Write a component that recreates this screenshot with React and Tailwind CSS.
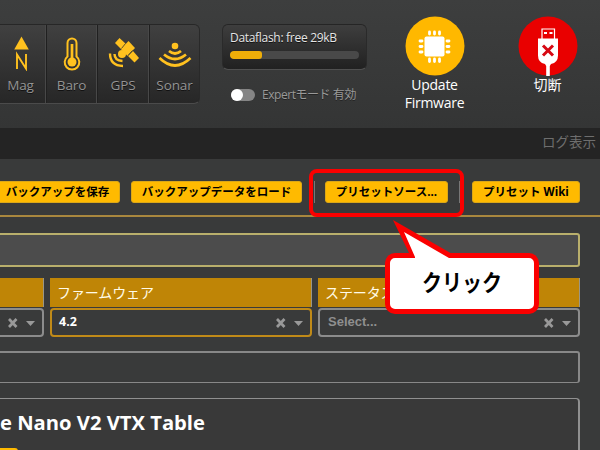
import React from "react";

function Sensor({ label, children, className = "" }) {
  return (
    <div className={`flex shrink-0 flex-col items-center border-l border-l-[#202020] border-r border-r-[#484848] pt-2.5 ${className}`}>
      <svg viewBox="0 0 36 36" className="h-9 w-9 shrink-0" fill="none" stroke="#ffc11f">{children}</svg>
      <span className="mt-[5px] whitespace-nowrap text-[13.5px] leading-[18px] tracking-[-0.1px] text-[#949494] [text-shadow:0_1px_#111]">{label}</span>
    </div>
  );
}

function Button({ children, className }) {
  return (
    <button className={`flex h-[22px] shrink-0 items-center justify-center whitespace-nowrap rounded-[3px] border border-[#dba718] bg-[#ffba00] text-[11.5px] font-bold leading-none text-black ${className}`}>
      {children}
    </button>
  );
}

function Filter({ label, value, className, border = "border-[#8c8c8c]", valueClass = "" }) {
  return (
    <div className={`shrink-0 ${className}`}>
      <div className="h-[29px] border-r border-r-[#9b9684] bg-[#bf8506] pl-[7px] text-[14px] leading-[29px] tracking-[-0.1px] text-[#fffbe7]">{label}</div>
      <div className={`mt-px flex h-[29px] items-center rounded-[4px] border-2 pl-[7px] pr-[6px] ${border}`}>
        <span className={`grow pb-px font-bold ${valueClass}`}>{value}</span>
        <svg viewBox="0 0 28 10" className="h-[10px] w-[28px] shrink-0">
          <path d="M1 1l7.500 8M8.500 1L1 9" stroke="#999" strokeWidth="2.700" />
          <path d="M18 3h9l-4.500 5z" fill="#999" />
        </svg>
      </div>
    </div>
  );
}

function Header() {
  return (
    <header className="flex h-32 items-start bg-linear-to-b from-[#3d3e3e] to-[#343535] pl-0">
      <div className="mt-6 flex h-[80px] w-[200px] shrink-0 overflow-hidden rounded-r-[6px] border-y border-r border-t-[#272727] border-r-[#292929] border-b-[#4b4b4b] bg-linear-to-b from-[#404040] to-[#272727]">
        <Sensor label="Mag" className="-ml-[5px] w-[51px]">
          <path d="M18.500 1.500L25.800 14.500H11.200z" fill="#ffc11f" stroke="none" />
          <path d="M14 34V19.500L23 33.500V19" strokeWidth="1.900" />
        </Sensor>
        <Sensor label="Baro" className="w-[51px]">
          <path d="M13.500 21.500V8a4.500 4.500 0 0 1 9 0v13.500a7.300 7.300 0 1 1-9 0z" strokeWidth="2" />
          <path d="M18 9v16" strokeWidth="2.700" />
          <circle cx="18" cy="27" r="4.500" fill="#ffc11f" stroke="none" />
        </Sensor>
        <Sensor label="GPS" className="w-[52px]">
          <g fill="#ffc11f" stroke="none">
            <path d="M10 8l4.500-5 7 6.500-5 5z" />
            <path d="M16 14l7.500-8 6.500 7-7.500 8z" />
            <path d="M23 21l5-5 6 7-4.500 4.500z" />
            <circle cx="17" cy="19" r="4" />
          </g>
          <path d="M20.500 8.500l-4 5M27.500 15.500l-4.500 5" stroke="#34322b" strokeWidth="0.800" />
          <path d="M9.500 19q0 6.500 8 7M5 18.500q0 12 13 12.500" strokeWidth="2.400" />
        </Sensor>
        <Sensor label="Sonar" className="w-[51px]">
          <circle cx="18" cy="11" r="3.300" fill="#ffc11f" stroke="none" />
          <path d="M12 16q6 5 12 0M7 19.500q11 9 22 0M2.500 23q15.500 15 31 0" strokeWidth="2.700" />
        </Sensor>
      </div>
      <div className="ml-[22px] mt-6 w-[145px] shrink-0">
        <div className="h-[46px] rounded-[6px] border border-t-[#252525] border-x-[#2a2a2a] border-b-[#505050] bg-linear-to-b from-[#3e3e3e] to-[#212121] px-[7px] pt-[5px]">
          <div className="whitespace-nowrap text-[12px] leading-4 tracking-[-0.3px] text-[#e5e5e5] [text-shadow:0_1px_#111]">Dataflash: free 29kB</div>
          <div className="mt-[5px] h-2 overflow-hidden rounded-[4px] bg-[#494949]">
            <div className="h-full w-8 rounded-[3px] bg-[#efae09]" />
          </div>
        </div>
        <div className="ml-[9px] mt-[17px] flex h-4 items-center whitespace-nowrap">
          <div className="h-3 w-6 shrink-0 rounded-full bg-[#858585]">
            <div className="h-3 w-3 rounded-full bg-white" />
          </div>
          <span className="ml-[7px] text-[12px] leading-4 tracking-[-0.450px] text-[#999] [text-shadow:0_1px_#222]">Expertモード 有効</span>
        </div>
      </div>
      <div className="ml-[27px] flex w-[81px] shrink-0 flex-col items-center pt-[15.500px] text-center text-[14px] leading-[18px] tracking-[-0.250px] text-white">
        <svg viewBox="0 0 60 60" className="h-[60px] w-[60px] shrink-0">
          <circle cx="30" cy="30" r="29.500" fill="#ffb800" />
          <rect x="19.500" y="20.500" width="20" height="20" rx="2" fill="#fff" />
          <path d="M24.500 16v2M29.500 16v2M34.500 16v2M24.500 43v2.500M29.500 43v2.500M34.500 43v2.500M15 25h2M15 30.500h2M15 36h2M42 25h2M42 30.500h2M42 36h2" stroke="#fff" strokeWidth="2.800" strokeLinecap="round" />
        </svg>
        <span>Update<br />Firmware</span>
      </div>
      <div className="ml-[42px] flex w-[61px] shrink-0 flex-col items-center pt-[15.500px] text-[14px] leading-[18px] text-white">
        <svg viewBox="0 0 60 60" className="h-[60px] w-[60px] shrink-0">
          <circle cx="30" cy="30" r="29.500" fill="#e90000" />
          <path d="M24 23V13h12.500V23" fill="none" stroke="#fff" strokeWidth="1.200" />
          <path d="M26 16h3v2h-3zM31.500 16h3v2h-3z" fill="#fff" />
          <path d="M20 22.500h20v17q0 7-7 8.500l-1.200 2v10h-3.600v-10L27 48q-7-1.500-7-8.500z" fill="#fff" />
          <path d="M25 29.500l10 10M35 29.500l-10 10" stroke="#d70813" strokeWidth="3" />
        </svg>
        <span>切断</span>
      </div>
    </header>
  );
}

function Callout() {
  return (
    <div className="absolute left-[385px] top-[220px] h-[95px] w-[155px]">
      <div className="absolute left-0 top-[33px] flex h-[61px] w-[154px] items-center justify-center rounded-[10px] border-[5px] border-[#fa0000] bg-white pb-1 font-['Noto_Sans_CJK_JP',sans-serif] text-[23px] font-bold text-black">
        <span className="inline-block origin-center scale-x-[0.87] whitespace-nowrap">クリック</span>
      </div>
      <svg viewBox="0 0 75 42" className="absolute left-[5px] top-0 h-[42px] w-[75px]">
        <path d="M3 0L20 35v3h44v-3z" fill="#fa0000" />
        <path d="M14 12L25 37v5h36v-4h-2z" fill="#fff" />
      </svg>
    </div>
  );
}

export default function App() {
  return (
    <div className="relative h-[450px] w-[600px] overflow-hidden bg-[#393a3a] font-['Open_Sans','Noto_Sans_CJK_JP',sans-serif]">
      <Header />
      <nav className="flex h-[31px] items-center justify-end bg-[#242424] pr-1 pb-0.5 text-[13.5px] text-[#6e6e6e]">ログ表示</nav>
      <main className="flex flex-col">
        <div className="flex h-[58px] items-start border-b-2 border-[#a9873e] pt-[22px]">
          <Button className="-ml-5 w-[140px] pl-[15px]">バックアップを保存</Button>
          <Button className="ml-[11px] w-[171px]">バックアップデータをロード</Button>
          <div className="ml-3 h-[22px] w-px bg-[#777]" />
          <Button className="ml-[10px] w-[123px]">プリセットソース...</Button>
          <div className="ml-[11px] h-[22px] w-px bg-[#777]" />
          <Button className="ml-3 w-[108px]">プリセット Wiki</Button>
        </div>
        <div className="-ml-2 mt-4 h-[34px] w-[588px] shrink-0 rounded-[3px] border-2 border-[#b9af6c] bg-[#4c4c4c]" />
        <div className="mt-[11px] flex gap-[6px]">
          <Filter label="" value="" className="-ml-[218px] w-[262px]" />
          <Filter label="ファームウェア" value="4.2" className="w-[262px]" border="border-[#c08a18]" valueClass="text-[12.5px] text-white" />
          <Filter label="ステータス" value="Select..." className="w-[262px]" valueClass="pl-px font-['Liberation_Sans',sans-serif] text-[13px] text-[#8f8f8f]" />
        </div>
        <div className="-ml-2 mt-[14px] h-[32px] w-[588px] shrink-0 rounded-[3px] border border-r-2 border-t-2 border-[#888]" />
        <section className="-ml-2 mt-[15px] flex h-[80px] w-[588px] shrink-0 flex-col items-start rounded-[4px] border border-r-2 border-[#909090] bg-[#393939] pl-[7px] pt-[10px]">
          <h2 className="whitespace-nowrap text-[20.2px] font-bold leading-[26px] text-white">e Nano V2 VTX Table</h2>
          <div className="mt-[13px] h-5 w-[18px] rounded-tr-[3px] bg-[#ffba00]" />
        </section>
      </main>
      <div className="absolute left-[309px] top-[169px] h-[48px] w-[155px] rounded-[8px] border-4 border-[#fa0000]" />
      <Callout />
    </div>
  );
}
